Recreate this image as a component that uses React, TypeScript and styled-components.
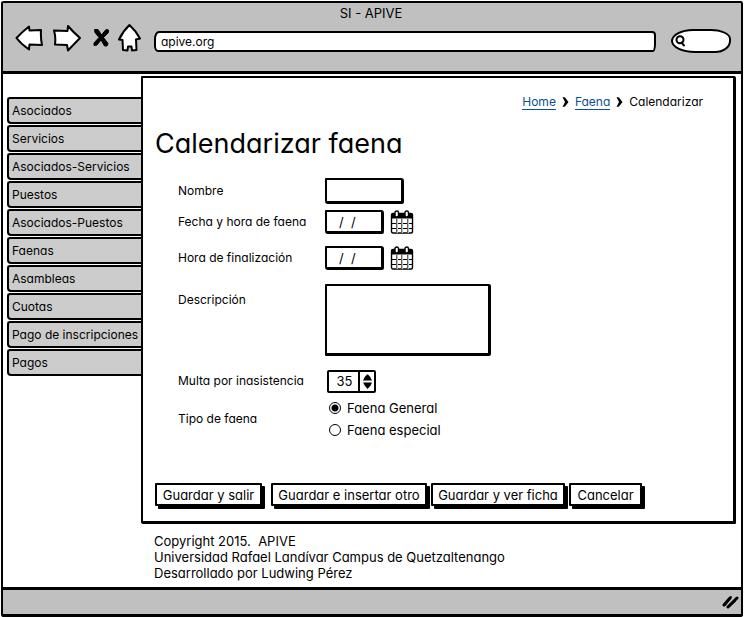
import React from "react";
import styled, { createGlobalStyle } from "styled-components";

const INK = "#000";
const CHROME = "#c0c0c0";
const TAB = "#cccccc";
const LINK = "#0b4f96";

const GlobalStyle = createGlobalStyle`
  *, *::before, *::after { box-sizing: border-box; }
  body {
    margin: 0;
    background: #fff;
    color: ${INK};
    font: 13px/16px Inter, "Open Sans", sans-serif;
    font-feature-settings: "cv11";
  }
  button, input, textarea { font: inherit; font-feature-settings: inherit; color: inherit; }
`;

const Window = styled.div`
  display: flex;
  flex-direction: column;
  min-height: 100vh;
  padding: 1px;
`;

const Frame = styled.div`
  flex: 1;
  display: flex;
  flex-direction: column;
  border: 2px solid ${INK};
  border-bottom-width: 3px;
  border-radius: 3px 2px 3px 2px / 2px 3px 2px 3px;
`;

const Chrome = styled.header`
  background: ${CHROME};
  border-bottom: 3px solid ${INK};
  padding: 2px 10px 18px 12px;
`;

const WindowTitle = styled.div`
  padding-right: 4px;
  text-align: center;
`;

const Toolbar = styled.div`
  display: flex;
  align-items: center;
  margin-top: 1px;
`;

const IconButton = styled.button<{ $gap?: number }>`
  display: flex;
  flex: none;
  border: 0;
  padding: 0;
  margin-right: ${(p) => p.$gap ?? 0}px;
  background: none;
  cursor: pointer;
`;

const Address = styled.input`
  flex: 1;
  min-width: 0;
  height: 21px;
  margin-top: 7px;
  padding: 0 5px;
  font-size: 12px;
  background: #fff;
  border: 2px solid ${INK};
  border-radius: 5px 4px 3px 4px / 8px 4px 8px 6px;
  outline: 0;
`;

const SearchBox = styled.label`
  display: flex;
  align-items: center;
  flex: none;
  width: 60px;
  height: 24px;
  margin: 7px 0 0 15px;
  padding-left: 2px;
  background: #fff;
  border: 2px solid ${INK};
  border-radius: 22px 20px 16px 24px / 12px 10px 12px 12px;
`;

const SearchInput = styled.input`
  flex: 1;
  min-width: 0;
  border: 0;
  padding: 0 4px;
  background: transparent;
  outline: 0;
`;

const Body = styled.div`
  flex: 1;
  display: grid;
  grid-template-columns: 134px 1fr;
  align-content: start;
  padding: 2px 5px 6px 4px;
`;

const Nav = styled.nav`
  display: flex;
  flex-direction: column;
  gap: 1px;
  padding-top: 21px;
  font-size: 12px;
`;

const Tab = styled.a`
  height: 27px;
  padding: 2px 0 0 3px;
  line-height: 20px;
  white-space: nowrap;
  color: ${INK};
  text-decoration: none;
  background: ${TAB};
  border: 2px solid ${INK};
  border-right: 0;
  border-radius: 3px 0 0 4px;
`;

const Panel = styled.main`
  min-height: 448px;
  padding: 16px 30px 14px 12px;
  background: #fff;
  border: 2px solid ${INK};
  border-bottom-width: 3px;
  border-right-width: 3px;
  border-radius: 1px 2px 1px 2px;
`;

const Crumbs = styled.nav`
  display: flex;
  justify-content: flex-end;
  align-items: center;
  gap: 6px;
  font-size: 12px;
`;

const CrumbLink = styled.a`
  color: ${LINK};
  text-decoration: none;
  border-bottom: 1px solid ${LINK};
  line-height: 15px;
`;

const Title = styled.h1`
  margin: 18px 0 15px;
  font-size: 27px;
  line-height: 32px;
  font-weight: 400;
`;

const Form = styled.form`
  display: grid;
  grid-template-columns: 147px 1fr;
  align-items: center;
  padding-left: 23px;
`;

const Row = styled.div<{ $h: number; $top?: boolean }>`
  display: grid;
  grid-column: 1 / -1;
  grid-template-columns: subgrid;
  align-items: ${(p) => (p.$top ? "start" : "center")};
  min-height: ${(p) => p.$h}px;
  padding-top: ${(p) => (p.$top ? 5 : 0)}px;
  font-size: 12px;
`;

const Label = styled.label<{ $top?: boolean }>`
  white-space: nowrap;
  padding-top: ${(p) => (p.$top ? 8 : 0)}px;
`;

const Controls = styled.div`
  display: flex;
  align-items: center;
  gap: 6px;
`;

const TextBox = styled.input<{ $w: number }>`
  width: ${(p) => p.$w}px;
  height: ${(p) => (p.$w > 60 ? 26 : 24)}px;
  padding: 0 12px;
  font-size: 13px;
  background: #fff;
  border: 3px solid ${INK};
  border-width: 2px 3px 3px 2px;
  border-radius: 1px 3px 2px 3px;
  outline: 0;
  white-space: pre;
`;

const TextArea = styled.textarea`
  width: 166px;
  height: 72px;
  resize: none;
  background: #fff;
  border: 2px solid ${INK};
  border-right-width: 3px;
  border-bottom-width: 3px;
  border-radius: 1px 2px 2px 1px;
  outline: 0;
`;

const Stepper = styled.div`
  display: flex;
  width: 49px;
  height: 23px;
  margin-left: 2px;
  border: 2px solid ${INK};
  border-radius: 2px;
`;

const StepperInput = styled.input`
  width: 31px;
  padding: 0 0 0 2px;
  font-size: 13px;
  border: 0;
  border-right: 2px solid ${INK};
  background: #fff;
  text-align: center;
  outline: 0;
`;

const Steps = styled.div`
  flex: 1;
  display: flex;
  flex-direction: column;
  align-items: center;
  justify-content: center;
  gap: 1px;
`;

const RadioGroup = styled.div`
  display: flex;
  flex-direction: column;
  gap: 6px;
  padding-left: 4px;
`;

const RadioLabel = styled.label`
  display: flex;
  align-items: center;
  gap: 6px;
  font-size: 13px;
`;

const Radio = styled.input`
  appearance: none;
  width: 12px;
  height: 12px;
  margin: 0;
  border: 1px solid ${INK};
  border-radius: 50%;
  background: #fff;
  &:checked { background: radial-gradient(circle, ${INK} 3px, #fff 4px); }
`;

const Actions = styled.div`
  display: flex;
  gap: 4px;
  margin-top: 39px;
`;

const Action = styled.button<{ $w: number; $apart?: boolean }>`
  min-width: ${(p) => p.$w}px;
  height: 23px;
  margin-right: ${(p) => (p.$apart ? 5 : 0)}px;
  padding: 0;
  white-space: nowrap;
  background: #fff;
  border: 2px solid ${INK};
  border-radius: 1px;
  box-shadow: 3px 3px 0 ${INK};
  cursor: pointer;
`;

const Credits = styled.footer`
  grid-column: 2;
  padding: 9px 0 0 13px;
`;

const CreditLine = styled.p`
  margin: 0;
  white-space: pre-wrap;
`;

const StatusBar = styled.footer`
  display: flex;
  justify-content: flex-end;
  align-items: center;
  height: 27px;
  padding-right: 2px;
  background: ${CHROME};
  border-top: 3px solid ${INK};
`;

const stroke = { stroke: INK, strokeWidth: 2, strokeLinejoin: "round", strokeLinecap: "round" } as const;

const BackIcon = () => (
  <svg width="28" height="28" viewBox="0 0 28 28" fill="#fff" {...stroke}>
    <path d="M1.5 14 Q7 8 14 2.5 L14.5 6.5 L26 6 Q25.5 14 27 21 L14.5 20.5 L14 25.5 Q6 20 1.5 14Z" />
  </svg>
);

const ForwardIcon = () => (
  <svg width="28" height="28" viewBox="0 0 28 28" fill="#fff" {...stroke}>
    <path d="M1 6.5 L14.5 7 L15 2 Q20 8 27 14 Q21 20 15 26.5 L14 21 L2 20.5 Q3 13 1 6.5Z" />
  </svg>
);

const StopIcon = () => (
  <svg width="17" height="20" viewBox="0 0 17 20" fill={INK} stroke={INK} strokeLinejoin="round">
    <path d="M1.5 1.5 L5 1.5 L8.5 7 L13 1.5 L15.5 2 L15.5 4.5 L10.5 9.5 L15 15.5 L14 18 L11.5 18 L8 12 L4 17 L1 17.5 L1 15 L6 9.5 L2 4.5Z" />
  </svg>
);

const HomeIcon = () => (
  <svg width="23" height="28" viewBox="0 0 23 28" fill="#fff" {...stroke}>
    <path d="M11.5 1 Q18 7 22 14.5 L18 15.5 L18.5 26 L14 26.5 L13.5 22.5 L10 22.5 L9.5 26.5 L5 26 L4.5 16 L1 15.5 Q5 7 11.5 1Z" />
  </svg>
);

const SearchIcon = () => (
  <svg width="11" height="12" viewBox="0 0 11 12" fill="none" {...stroke}>
    <circle cx="5" cy="4.8" r="3.5" />
    <path d="M6.5 7.5 L9 10.5" />
  </svg>
);

const Chevron = () => (
  <svg width="7" height="10" viewBox="0 0 7 10" fill={INK}>
    <path d="M0.5 0 L3 0.5 L6.5 5 L3 9.5 L0.5 10 L3 5Z" />
  </svg>
);

const CalendarIcon = () => (
  <svg width="24" height="24" viewBox="0 0 24 24">
    <rect x="1.5" y="3.5" width="21" height="19.5" rx="1.5" fill="#fff" stroke={INK} strokeWidth="1.4" />
    <rect x="1" y="4" width="22" height="4.5" fill={INK} />
    <path d="M1 13.5H23M1 18.5H23" stroke={INK} />
    <path d="M6.5 9V23M11.5 9V23M17.5 9V23" stroke="#8a5c30" />
    <path d="M7.5 9V23M12.5 9V23M18.5 9V23" stroke="#9cc8ee" />
    <rect x="5" y="1" width="3.5" height="6" rx="1.7" fill="#fff" stroke={INK} strokeWidth="1.4" />
    <rect x="15" y="1" width="3.5" height="6" rx="1.7" fill="#fff" stroke={INK} strokeWidth="1.4" />
  </svg>
);

const StepIcon = ({ down = false }: { down?: boolean }) => (
  <svg width="11" height="7" viewBox="0 0 11 7" fill={INK}>
    <path d={down ? "M1 0.5 H10 Q9 4 5.5 7 Q3 4.5 1 0.5Z" : "M1 6.5 H10 Q9 3 6 0.5 H5 Q2 3 1 6.5Z"} />
  </svg>
);

const GripIcon = () => (
  <svg width="17" height="14" viewBox="0 0 17 14" fill="none" stroke={INK} strokeWidth="3" strokeLinecap="round">
    <path d="M2 10 L8 3 M6 12 L15 3" />
    <path d="M3 10 L9 2 M7 11 L13 6" strokeWidth="2" />
  </svg>
);

const SECTIONS = [
  "Asociados", "Servicios", "Asociados-Servicios", "Puestos", "Asociados-Puestos",
  "Faenas", "Asambleas", "Cuotas", "Pago de inscripciones", "Pagos",
];

const DateField = ({ id, label }: { id: string; label: string }) => (
  <Controls>
    <TextBox id={id} $w={59} defaultValue="/  /" />
    <IconButton type="button" aria-label={label}><CalendarIcon /></IconButton>
  </Controls>
);

export default function App() {
  const [fine, setFine] = React.useState(35);
  return (
    <Window>
      <GlobalStyle />
      <Frame>
        <Chrome>
          <WindowTitle>SI - APIVE</WindowTitle>
          <Toolbar>
            <IconButton $gap={10} aria-label="Atrás"><BackIcon /></IconButton>
            <IconButton $gap={12} aria-label="Adelante"><ForwardIcon /></IconButton>
            <IconButton $gap={8} aria-label="Detener"><StopIcon /></IconButton>
            <IconButton $gap={13} aria-label="Inicio"><HomeIcon /></IconButton>
            <Address aria-label="Dirección" defaultValue="apive.org" />
            <SearchBox>
              <SearchIcon />
              <SearchInput aria-label="Buscar" />
            </SearchBox>
          </Toolbar>
        </Chrome>
        <Body>
          <Nav>
            {SECTIONS.map((name) => <Tab key={name} href="#">{name}</Tab>)}
          </Nav>
          <Panel>
            <Crumbs>
              <CrumbLink href="#">Home</CrumbLink>
              <Chevron />
              <CrumbLink href="#">Faena</CrumbLink>
              <Chevron />
              <span>Calendarizar</span>
            </Crumbs>
            <Title>Calendarizar faena</Title>
            <Form id="faena" onSubmit={(e) => e.preventDefault()}>
              <Row $h={32}>
                <Label htmlFor="nombre">Nombre</Label>
                <TextBox id="nombre" $w={79} />
              </Row>
              <Row $h={30}>
                <Label htmlFor="fecha">Fecha y hora de faena</Label>
                <DateField id="fecha" label="Elegir fecha" />
              </Row>
              <Row $h={42}>
                <Label htmlFor="fin">Hora de finalización</Label>
                <DateField id="fin" label="Elegir fecha de finalización" />
              </Row>
              <Row $h={89} $top>
                <Label $top htmlFor="descripcion">Descripción</Label>
                <TextArea id="descripcion" />
              </Row>
              <Row $h={26}>
                <Label htmlFor="multa">Multa por inasistencia</Label>
                <Stepper>
                  <StepperInput id="multa" inputMode="numeric" value={fine} onChange={(e) => setFine(Number(e.target.value) || 0)} />
                  <Steps>
                    <IconButton type="button" aria-label="Aumentar" onClick={() => setFine(fine + 1)}><StepIcon /></IconButton>
                    <IconButton type="button" aria-label="Disminuir" onClick={() => setFine(fine - 1)}><StepIcon down /></IconButton>
                  </Steps>
                </Stepper>
              </Row>
              <Row $h={50}>
                <span id="tipo">Tipo de faena</span>
                <RadioGroup role="radiogroup" aria-labelledby="tipo">
                  <RadioLabel><Radio type="radio" name="tipo" defaultChecked />Faena General</RadioLabel>
                  <RadioLabel><Radio type="radio" name="tipo" />Faena especial</RadioLabel>
                </RadioGroup>
              </Row>
            </Form>
            <Actions>
              <Action form="faena" $w={107} $apart>Guardar y salir</Action>
              <Action form="faena" $w={156}>Guardar e insertar otro</Action>
              <Action form="faena" $w={134}>Guardar y ver ficha</Action>
              <Action type="button" $w={73}>Cancelar</Action>
            </Actions>
          </Panel>
          <Credits>
            <CreditLine>Copyright 2015.  APIVE</CreditLine>
            <CreditLine>Universidad Rafael Landívar Campus de Quetzaltenango</CreditLine>
            <CreditLine>Desarrollado por Ludwing Pérez</CreditLine>
          </Credits>
        </Body>
        <StatusBar><GripIcon /></StatusBar>
      </Frame>
    </Window>
  );
}
